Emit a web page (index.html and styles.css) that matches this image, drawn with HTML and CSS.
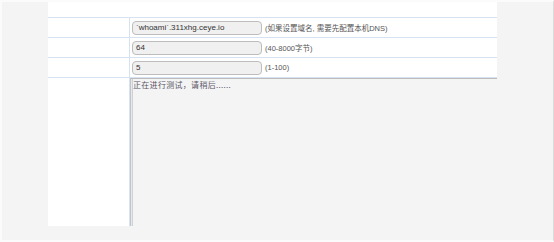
FILE: index.html
```html
<!DOCTYPE html>
<html lang="zh-CN">
<head>
    <meta charset="UTF-8">
    <meta name="viewport" content="width=device-width, initial-scale=1.0">
    <title>DNS 测试</title>
    <link rel="stylesheet" href="styles.css">
</head>
<body>
    <div class="page">
        <div class="panel">
            <div class="head"></div>
            <div class="row">
                <div class="label"></div>
                <div class="value">
                    <input class="field" type="text" value="`whoami`.311xhg.ceye.io">
                    <span class="hint">(如果设置域名, 需要先配置本机DNS)</span>
                </div>
            </div>
            <div class="row">
                <div class="label"></div>
                <div class="value">
                    <input class="field" type="text" value="64">
                    <span class="hint">(40-8000字节)</span>
                </div>
            </div>
            <div class="row">
                <div class="label"></div>
                <div class="value">
                    <input class="field" type="text" value="5">
                    <span class="hint">(1-100)</span>
                </div>
            </div>
            <div class="row output">
                <div class="label"></div>
                <textarea class="log" readonly>正在进行测试，请稍后......</textarea>
            </div>
        </div>
    </div>
</body>
</html>
```

FILE: styles.css
```css
body {
    margin: 0;
    padding: 0;
    font-family: "Liberation Sans", "Noto Sans CJK SC", sans-serif;
    background: #f4f4f4;
}
.page {
    box-sizing: border-box;
    height: 242px;
    border: 2px solid #fbfbfb;
    border-right: 1px solid #dcdcdc;
    padding-left: 46px;
    background: #f4f4f4;
}
.panel {
    width: 449px;
}
.head {
    height: 16px;
    background: white;
    border-bottom: 1px solid #d6e2ef;
    box-sizing: border-box;
}
.row {
    display: grid;
    grid-template-columns: 82px 1fr;
    height: 20px;
}
.label {
    box-sizing: border-box;
    background: white;
    border-right: 1px solid #d6e2ef;
    border-bottom: 1px solid #d6e2ef;
}
.value {
    box-sizing: border-box;
    background: white;
    border-bottom: 1px solid #d6e2ef;
    display: flex;
    align-items: center;
    gap: 3px;
    padding-left: 2px;
}
.field {
    box-sizing: border-box;
    width: 130px;
    height: 14px;
    margin: 0;
    padding: 0 3px;
    border: 1px solid #bdbdbd;
    border-radius: 4px;
    background: #f0f0f0;
    font-family: "Liberation Sans", sans-serif;
    font-size: 8px;
    color: #333;
}
.hint {
    font-size: 7.5px;
    color: #555;
    white-space: nowrap;
}
.output {
    height: 148px;
}
.output .label {
    border-bottom: none;
}
.log {
    box-sizing: border-box;
    display: block;
    width: 100%;
    height: 148px;
    margin: 0;
    padding: 1px 2px;
    resize: none;
    border: none;
    border-top: 1px solid #bcbcbc;
    border-left: 1px solid #c2c5cc;
    box-shadow: inset 1px 0 #e6e8ec, inset 2px 0 #cfd1d6;
    background: #f4f4f4;
    font-family: "Noto Sans CJK SC", sans-serif;
    font-size: 8px;
    line-height: 10px;
    letter-spacing: 0.3px;
    color: #5a5566;
}
```
